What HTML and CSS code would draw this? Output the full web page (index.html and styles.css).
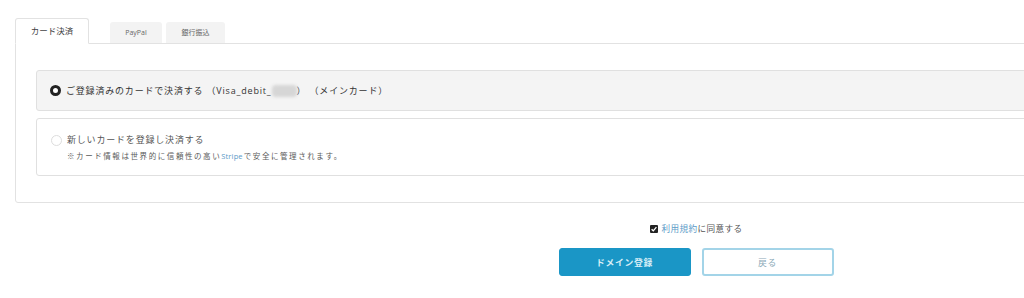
FILE: index.html
```html
<!DOCTYPE html>
<html lang="ja">
<head>
<meta charset="utf-8">
<title>お支払い</title>
<link rel="stylesheet" href="styles.css">
</head>
<body>
<div class="page">
  <div class="tabs">
    <div class="tab tab-active">カード決済</div>
    <div class="tab tab-paypal">PayPal</div>
    <div class="tab tab-bank">銀行振込</div>
  </div>
  <div class="panel">
    <div class="option option-selected">
      <span class="radio radio-on"></span>
      <span class="opt-label">ご登録済みのカードで決済する （Visa_debit_<span class="blur"></span>） （メインカード）</span>
    </div>
    <div class="option option-new">
      <span class="radio"></span>
      <div class="opt-body">
        <div class="opt-label light">新しいカードを登録し決済する</div>
        <div class="note">※カード情報は世界的に信頼性の高い<span class="link stripe">Stripe</span>で安全に管理されます。</div>
      </div>
    </div>
  </div>
  <div class="agree">
    <span class="check"><svg viewBox="0 0 8 8" width="8" height="8"><rect x="0" y="0" width="8" height="8" rx="1" fill="#222"/><path d="M1.6 4.2 L3.3 5.8 L6.4 2.2" stroke="#fff" stroke-width="1.3" fill="none"/></svg></span>
    <span class="agree-text"><span class="link">利用規約</span>に同意する</span>
  </div>
  <div class="buttons">
    <button class="btn btn-primary">ドメイン登録</button>
    <button class="btn btn-secondary">戻る</button>
  </div>
</div>
</body>
</html>
```
FILE: styles.css
```css
html, body {
  margin: 0;
  padding: 0;
  overflow: hidden;
  background: #fff;
}
body {
  font-family: "Open Sans", "Noto Sans CJK JP", sans-serif;
  color: #555;
}
.page {
  width: 1362px;
  padding: 18px 0 0 15px;
}
.tabs {
  display: flex;
  align-items: flex-end;
  height: 25px;
  position: relative;
  z-index: 1;
}
.tab {
  height: 21px;
  box-sizing: border-box;
  font-size: 7px;
  line-height: 21px;
  text-align: center;
  color: #666;
  background: #f3f3f3;
  border-radius: 3px 3px 0 0;
  margin-right: 4px;
}
.tab-paypal {
  width: 52px;
  margin-left: 21px;
}
.tab-bank {
  width: 59px;
}
.tab-active {
  height: 26px;
  margin-bottom: -1px;
  width: 74px;
  background: #fff;
  border: 1px solid #e2e2e2;
  border-bottom: 1px solid #fff;
  font-size: 8.5px;
  line-height: 24px;
  color: #444;
  margin-right: 0;
}
.panel {
  border: 1px solid #e2e2e2;
  border-radius: 0 0 3px 3px;
  padding: 26px 0 26px 20px;
  display: flex;
  flex-direction: column;
  gap: 7px;
}
.option {
  display: flex;
  align-items: center;
  border: 1px solid #e0e0e0;
  border-radius: 3px;
  padding-left: 13px;
  box-sizing: border-box;
}
.option-selected {
  height: 41px;
  background: #f4f4f4;
}
.option-new {
  height: 58px;
  background: #fff;
  align-items: flex-start;
  padding-top: 15px;
  padding-left: 14px;
}
.option-new .radio {
  margin-top: 1px;
}
.radio {
  flex: none;
  width: 11px;
  height: 11px;
  box-sizing: border-box;
  border-radius: 50%;
  border: 1px solid #ddd;
  background: #fff;
  margin-right: 5px;
}
.radio-on {
  border: 3px solid #222;
}
.opt-label {
  font-size: 9px;
  line-height: 12px;
  letter-spacing: 0.09em;
  color: #333;
}
.opt-label.light {
  color: #555;
}
.blur {
  display: inline-block;
  width: 25px;
  height: 12px;
  vertical-align: -3px;
  background: #d6d6d6;
  border-radius: 4px;
  filter: blur(1.5px);
}
.note {
  margin-top: 5px;
  font-size: 7.5px;
  line-height: 10px;
  letter-spacing: 0.21em;
  color: #5a5a5a;
}
.link {
  color: #5c9bc8;
}
.stripe {
  letter-spacing: 0.02em;
  margin-right: 1px;
}
.agree {
  display: flex;
  justify-content: center;
  align-items: center;
  margin-top: 20px;
  height: 12px;
  gap: 3px;
  padding-left: 1px;
}
.check {
  display: flex;
}
.agree-text {
  font-size: 8.6px;
  line-height: 12px;
  letter-spacing: 0.05em;
  color: #555;
}
.buttons {
  display: flex;
  justify-content: center;
  gap: 11px;
  margin-top: 13px;
}
.btn {
  width: 132px;
  height: 28px;
  box-sizing: border-box;
  border-radius: 3px;
  font-family: "Open Sans", "Noto Sans CJK JP", sans-serif;
  font-size: 8.8px;
  font-weight: bold;
  letter-spacing: 0.08em;
  cursor: pointer;
  padding: 0;
}
.btn-primary {
  background: #1a96c6;
  border: 1px solid #1a96c6;
  color: #d8eef7;
}
.btn-secondary {
  background: #fff;
  border: 2px solid #a3d4e8;
  color: #8aa9b8;
  font-weight: normal;
}
```
